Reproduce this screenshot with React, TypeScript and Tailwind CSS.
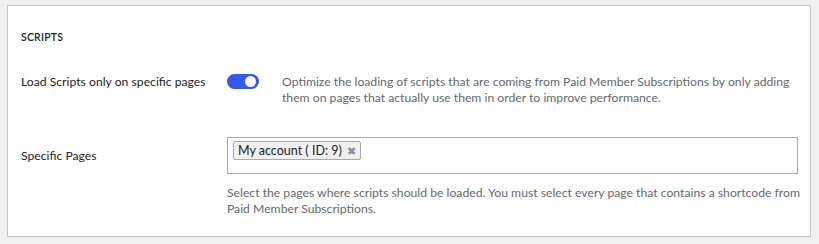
export default function App() {
  return (
    <div className="w-[819px] h-[244px] bg-[#f0f0f1] pt-[5px] pl-[7px] font-['Lato',sans-serif] text-[12.2px] text-[#1d2327]">
      <div className="w-[804px] h-[232px] bg-white border border-[#c3c4c7] pl-[13px] pt-[24px]">
        <h3 className="text-[10.5px] font-semibold uppercase leading-[14px] tracking-[0.2px]">Scripts</h3>

        <div className="mt-[17px] flex">
          <div className="w-[206px] pt-[13px] leading-[16px] whitespace-nowrap">Load Scripts only on specific pages</div>
          <div className="pt-[13px]">
            <button className="relative block w-[32px] h-[15px] rounded-full bg-[#3858e9]">
              <span className="absolute right-[3px] top-[2px] w-[11px] h-[11px] rounded-full bg-white" />
            </button>
          </div>
          <p className="ml-[23px] w-[516px] pt-[13px] text-[#646970] leading-[16px]">
            Optimize the loading of scripts that are coming from Paid Member Subscriptions by only adding them on pages that actually use them in order to improve performance.
          </p>
        </div>

        <div className="mt-[31px] flex">
          <div className="w-[206px] pt-[11px] leading-[16px]">Specific Pages</div>
          <div className="w-[571px]">
            <div className="h-[37px] border border-[#a7aaad] pl-[5px] pt-[3px]">
              <span className="inline-flex items-center h-[19px] px-[4px] border border-[#a7aaad] rounded-[2px] bg-[#f0f0f1] leading-[16px] text-[12.5px]">
                My account ( ID: 9)
                <span className="ml-[5px] text-[#8c8f94] text-[11px]">✖</span>
              </span>
            </div>
            <p className="mt-[11px] w-[590px] text-[#646970] leading-[16px]">
              Select the pages where scripts should be loaded. You must select every page that contains a shortcode from Paid Member Subscriptions.
            </p>
          </div>
        </div>
      </div>
    </div>
  );
}
